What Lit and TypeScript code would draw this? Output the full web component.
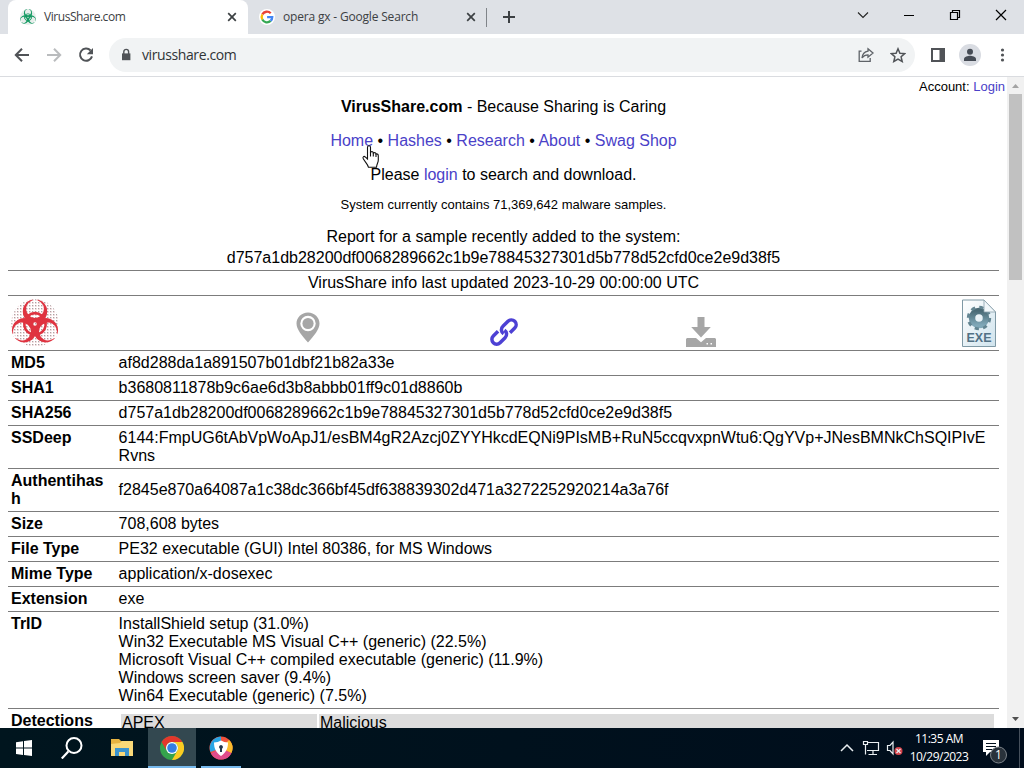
import { LitElement, css, html, svg } from 'lit';
import { customElement, property } from 'lit/decorators.js';

interface ReportRow {
  label: string;
  lines: string[];
  middle?: boolean;
}

const ROWS: ReportRow[] = [
  { label: 'MD5', lines: ['af8d288da1a891507b01dbf21b82a33e'] },
  { label: 'SHA1', lines: ['b3680811878b9c6ae6d3b8abbb01ff9c01d8860b'] },
  { label: 'SHA256', lines: ['d757a1db28200df0068289662c1b9e78845327301d5b778d52cfd0ce2e9d38f5'] },
  {
    label: 'SSDeep',
    lines: ['6144:FmpUG6tAbVpWoApJ1/esBM4gR2Azcj0ZYYHkcdEQNi9PIsMB+RuN5ccqvxpnWtu6:QgYVp+JNesBMNkChSQIPIvE', 'Rvns'],
  },
  {
    label: 'Authentihash',
    lines: ['f2845e870a64087a1c38dc366bf45df638839302d471a3272252920214a3a76f'],
    middle: true,
  },
  { label: 'Size', lines: ['708,608 bytes'] },
  { label: 'File Type', lines: ['PE32 executable (GUI) Intel 80386, for MS Windows'] },
  { label: 'Mime Type', lines: ['application/x-dosexec'] },
  { label: 'Extension', lines: ['exe'] },
  {
    label: 'TrID',
    lines: [
      'InstallShield setup (31.0%)',
      'Win32 Executable MS Visual C++ (generic) (22.5%)',
      'Microsoft Visual C++ compiled executable (generic) (11.9%)',
      'Windows screen saver (9.4%)',
      'Win64 Executable (generic) (7.5%)',
    ],
  },
];

const NAV = ['Home', 'Hashes', 'Research', 'About', 'Swag Shop'];

// Biohazard mark: three open rings around a centre, plus a middle ring.
const biohazard = (id: string, color: string, size: number) => html`
  <svg width=${size} height=${size} viewBox="0 0 48 48">
    <defs>
      <pattern id="${id}-dots" width="3" height="3" patternUnits="userSpaceOnUse">
        <rect width="2" height="2" fill=${color} opacity="0.12" />
        <rect width="1.2" height="1.2" fill="#777" opacity="0.6" />
      </pattern>
      <mask id="${id}-mask">
        <rect width="48" height="48" fill="#fff" />
        ${[0, 120, 240].map(
          (a) => svg`<g transform="rotate(${a} 24 25)">
            <circle cx="24" cy="10" r="8.9" fill="#000" />
            <rect x="21.5" y="0" width="5" height="6" fill="#000" />
          </g>`,
        )}
        <circle cx="24" cy="25" r="1.8" fill="#000" />
      </mask>
    </defs>
    <circle cx="24" cy="24" r="23.8" fill="url(#${id}-dots)" />
    <g mask="url(#${id}-mask)" fill=${color}>
      ${[0, 120, 240].map((a) => svg`<circle cx="24" cy="12.5" r="12.2" transform="rotate(${a} 24 25)" />`)}
    </g>
    <g fill="none" stroke=${color} stroke-width="2.6">
      ${[0, 120, 240].map((a) => svg`<path d="M17 16.8Q24 11.6 31 16.8" transform="rotate(${a} 24 25)" />`)}
    </g>
  </svg>
`;

const closeIcon = html`<svg width="10" height="10" viewBox="0 0 10 10">
  <path d="M1.2 1.2l7.6 7.6M8.8 1.2L1.2 8.8" stroke="#3c4043" stroke-width="1.7" />
</svg>`;

@customElement('browser-tabs')
export class BrowserTabs extends LitElement {
  static styles = css`
    :host {
      display: flex;
      height: 34px;
      padding-left: 8px;
      background: #dee1e6;
      font: 12px/34px 'Open Sans', 'Noto Sans', sans-serif;
      color: #3c4043;
    }
    svg {
      display: block;
      flex: none;
    }
    .tab {
      display: flex;
      align-items: center;
      box-sizing: border-box;
      width: 240px;
      padding: 0 11px 0 12px;
    }
    .active {
      background: #fff;
      border-radius: 8px 8px 0 0;
    }
    .idle {
      padding: 0 12px 0 11px;
    }
    .title {
      flex: 1;
      margin-left: 8px;
      white-space: nowrap;
      letter-spacing: -0.45px;
    }
    .search {
      letter-spacing: -0.18px;
    }
    .rule {
      width: 1px;
      height: 19px;
      margin: 8px 16px 0 -2px;
      background: #808489;
    }
    .plus {
      margin-top: 11px;
    }
    .controls {
      display: flex;
      align-items: center;
      height: 29px;
      margin-left: auto;
      padding-right: 17px;
      gap: 34px;
    }
  `;

  render() {
    return html`
      <div class="tab active">
        ${biohazard('fav', '#159a63', 16)}
        <span class="title">VirusShare.com</span>${closeIcon}
      </div>
      <div class="tab idle">
        <svg width="16" height="16" viewBox="0 0 15 15">
          <circle cx="7.5" cy="7.5" r="7.5" fill="#fff" />
          <g fill="none" stroke-width="2.2">
            <path d="M11 4A5 5 0 0 0 3.1 5.1" stroke="#ea4335" />
            <path d="M3.1 5.1A5 5 0 0 0 3.1 9.9" stroke="#fbbc05" />
            <path d="M3.1 9.9A5 5 0 0 0 10.9 11.2" stroke="#34a853" />
            <path d="M10.9 11.2A5 5 0 0 0 12.4 7.6H7.6" stroke="#4285f4" />
          </g>
        </svg>
        <span class="title search">opera gx - Google Search</span>${closeIcon}
      </div>
      <div class="rule"></div>
      <svg class="plus" width="12" height="12" viewBox="0 0 12 12">
        <path d="M6 0v12M0 6h12" stroke="#3c4043" stroke-width="2" />
      </svg>
      <div class="controls">
        <svg width="12" height="12" viewBox="0 0 12 12">
          <path d="M1 3.5l5 5 5-5" fill="none" stroke="#222" stroke-width="1.1" />
        </svg>
        <svg width="12" height="12" viewBox="0 0 12 12"><path d="M1 6.5h10" stroke="#000" /></svg>
        <svg width="12" height="12" viewBox="0 0 12 12">
          <path d="M1.5 3.5h7v7h-7zM3.5 3.5v-2h7v7h-2" fill="none" stroke="#000" stroke-width="1.2" />
        </svg>
        <svg width="12" height="12" viewBox="0 0 12 12">
          <path d="M1 1l10 10M11 1L1 11" stroke="#000" stroke-width="1.2" />
        </svg>
      </div>
    `;
  }
}

@customElement('browser-toolbar')
export class BrowserToolbar extends LitElement {
  @property()
  url = '';

  static styles = css`
    :host {
      display: flex;
      align-items: center;
      box-sizing: border-box;
      height: 43px;
      padding: 0 13px 0 14px;
      border-bottom: 1px solid #dadce0;
      background: #fff;
      gap: 16px;
    }
    svg {
      display: block;
      flex: none;
    }
    .omnibox {
      display: flex;
      align-items: center;
      flex: 1;
      box-sizing: border-box;
      height: 34px;
      margin: 0 -1px;
      padding: 0 9px 0 10px;
      border-radius: 17px;
      background: #f1f3f4;
      gap: 16px;
    }
    .url {
      flex: 1;
      margin-left: -7px;
      font: 14px/32px 'Open Sans', 'Noto Sans', sans-serif;
      letter-spacing: -0.4px;
      color: #303336;
    }
    .avatar {
      margin: 0 -2px 0 -3px;
    }
  `;

  render() {
    return html`
      <svg width="16" height="16" viewBox="0 0 16 16">
        <path d="M15 8H2M8 1.8L1.8 8L8 14.2" fill="none" stroke="#505357" stroke-width="2" />
      </svg>
      <svg width="16" height="16" viewBox="0 0 16 16">
        <path d="M1 8h13M8 1.8L14.2 8L8 14.2" fill="none" stroke="#babcbe" stroke-width="2" />
      </svg>
      <svg width="16" height="16" viewBox="0 0 16 16">
        <path d="M12.6 3.5A6.1 6.1 0 1 0 14 9.4" fill="none" stroke="#505357" stroke-width="2" />
        <path d="M15 1v6.2H8.8z" fill="#505357" />
      </svg>
      <div class="omnibox">
        <svg width="14" height="14" viewBox="0 0 14 14">
          <path d="M3 5.4h8.4v6.8H3z" fill="#505357" />
          <path d="M4.8 6V3.8a2.4 2.4 0 0 1 4.8 0V6" fill="none" stroke="#505357" stroke-width="1.4" />
        </svg>
        <span class="url">${this.url}</span>
        <svg width="16" height="16" viewBox="0 0 16 16" fill="none" stroke="#5f6368" stroke-width="1.3">
          <path d="M3.5 4.2H1.2v10.2h11V11" />
          <path d="M10 1.8l5 4.2-5 4.2V7.9C7.2 7.9 5.6 8.7 4 11c.4-3.6 2.4-6.2 6-6.8z" />
        </svg>
        <svg width="16" height="16" viewBox="0 0 16 16">
          <path
            d="M8 1.8l1.9 4.4 4.8.4-3.6 3.2 1.1 4.7L8 12l-4.2 2.5 1.1-4.7L1.3 6.6l4.8-.4z"
            fill="none"
            stroke="#505357"
            stroke-width="1.5"
          />
        </svg>
      </div>
      <svg width="16" height="16" viewBox="0 0 16 16">
        <path d="M1 1h14v14H1zM3 3v10h6.5V3z" fill="#505357" fill-rule="evenodd" />
      </svg>
      <svg class="avatar" width="22" height="22" viewBox="0 0 22 22">
        <circle cx="11" cy="11" r="11" fill="#d9dce2" />
        <circle cx="11" cy="7.8" r="3" fill="#454b54" />
        <path d="M5 17v-2c0-2.5 4-3.3 6-3.3s6 .8 6 3.3v2z" fill="#454b54" />
      </svg>
      <svg width="16" height="16" viewBox="0 0 16 16" fill="#505357">
        <circle cx="7.5" cy="3" r="1.6" />
        <circle cx="7.5" cy="8" r="1.6" />
        <circle cx="7.5" cy="13" r="1.6" />
      </svg>
    `;
  }
}

@customElement('share-page')
export class SharePage extends LitElement {
  static styles = css`
    :host {
      display: block;
      box-sizing: border-box;
      height: 100%;
      overflow: hidden;
      padding: 0 8px;
      font: 16px/18px 'Liberation Sans', Arial, sans-serif;
      color: #000;
    }
    a {
      color: #4a41c8;
    }
    p {
      margin: 0 0 16px;
    }
    .account {
      height: 21px;
      margin-right: -6px;
      font-size: 13px;
      line-height: 20px;
      text-align: right;
    }
    .intro {
      text-align: center;
    }
    .intro .count {
      margin: -3px 0 14px;
      font-size: 13px;
      line-height: 15px;
    }
    .intro .recent {
      margin: 0;
      padding-bottom: 2px;
      line-height: 21px;
    }
    .row {
      display: flex;
      border-bottom: 1px solid #7c7c7c;
    }
    .updated {
      border-top: 1px solid #7c7c7c;
      border-bottom: 1px solid #7c7c7c;
      padding: 3px;
      text-align: center;
    }
    .label {
      flex: none;
      width: 94px;
      padding: 3px 10px 3px 3px;
      font-weight: bold;
      word-break: break-all;
    }
    .label.wide {
      word-break: normal;
    }
    .value {
      flex: 1;
      padding: 3px 3px 3px 3.6px;
      white-space: nowrap;
    }
    .middle {
      align-self: center;
    }
    .icons {
      display: grid;
      grid-template-columns: 202px 196px 196px 198px 1fr;
      height: 54px;
      border-bottom: 1px solid #7c7c7c;
      justify-items: center;
      align-items: end;
    }
    .icons svg {
      display: block;
    }
    .icons :first-child {
      justify-self: start;
      margin: 0 0 3px 3px;
    }
    .icons .pin {
      margin-bottom: 7px;
    }
    .icons .mid {
      margin-bottom: 2px;
    }
    .icons :last-child {
      justify-self: end;
      margin: 0 3px 3px 0;
    }
    .detections {
      flex: 1;
      display: grid;
      grid-template-columns: 196px 675px;
      gap: 2px;
      padding: 5px 0 0 5px;
      margin-left: 1px;
    }
    .detections span {
      padding: 0 1px 2px;
      height: 20px;
      background: #dcdcdc;
    }
    .exe {
      font: bold 12.5px 'Liberation Sans', Arial, sans-serif;
    }
  `;

  render() {
    return html`
      <div class="account">Account: <a>Login</a></div>
      <div class="intro">
        <p><b>VirusShare.com</b> - Because Sharing is Caring</p>
        <p>${NAV.map((item, i) => html`${i ? ' • ' : ''}<a>${item}</a>`)}</p>
        <p>Please <a>login</a> to search and download.</p>
        <p class="count">System currently contains 71,369,642 malware samples.</p>
        <p class="recent">
          Report for a sample recently added to the system:<br />
          d757a1db28200df0068289662c1b9e78845327301d5b778d52cfd0ce2e9d38f5
        </p>
      </div>
      <div class="updated">VirusShare info last updated 2023-10-29 00:00:00 UTC</div>
      <div class="icons">
        ${biohazard('logo', '#df3340', 48)}
        <svg class="pin" width="24" height="31" viewBox="0 0 24 31">
          <path
            d="M12 .5C5.5.5.5 5.5.5 11.5c0 6 5.5 12 11.5 19 6-7 11.5-13 11.5-19C23.5 5.5 18.5.5 12 .5z"
            fill="#a6a6a6"
          />
          <circle cx="12" cy="11.5" r="7.7" fill="#fff" />
          <circle cx="12" cy="11.5" r="5.6" fill="#a6a6a6" />
        </svg>
        <svg class="mid" width="32" height="32" viewBox="0 0 32 32">
          <g transform="translate(1.3 1.3) scale(0.92) rotate(-45 16 16)" fill="none" stroke="#4d41d4" stroke-width="3.8">
            <path d="M12 10.8H4.7a5.2 5.2 0 0 0 0 10.4H12.5a5.2 5.2 0 0 0 5.2-6.3" />
            <path d="M20 21.2h7.3a5.2 5.2 0 0 0 0-10.4H19.5a5.2 5.2 0 0 0-5.2 6.3" />
          </g>
        </svg>
        <svg class="mid" width="30" height="32" viewBox="0 0 30 32" fill="#a6a6a6">
          <path d="M11.5 1h7v10h6.3L15 21.5 5.2 11h6.3z" />
          <path d="M1 22h9l5 4.3L20 22h9l1 1v8H0v-8z" />
          <path d="M20.5 27H22v1.5h-1.5zM24.5 27H26v1.5h-1.5z" fill="#fff" />
        </svg>
        <svg width="34" height="48" viewBox="0 0 34 48">
          <defs>
            <linearGradient id="sheet" x2="1" y2="1">
              <stop offset="0" stop-color="#fff" />
              <stop offset="1" stop-color="#cfe3ed" />
            </linearGradient>
            <linearGradient id="gear" x2="0" y2="1">
              <stop offset="0" stop-color="#4a6a75" />
              <stop offset="1" stop-color="#80a8b8" />
            </linearGradient>
          </defs>
          <path d="M.5 1h21.5l11.5 12v34.5H.5z" fill="url(#sheet)" stroke="#7f99a5" />
          <circle cx="17" cy="19" r="7" fill="none" stroke="url(#gear)" stroke-width="6.5" />
          <circle cx="17" cy="19" r="10.8" fill="none" stroke="#638592" stroke-width="2.8" stroke-dasharray="4.24 4.24" />
          <path d="M22 1v12h11.5z" fill="#f1f7fa" stroke="#8ba1ac" stroke-width=".8" />
          <text class="exe" x="17" y="43" text-anchor="middle" fill="#527185">EXE</text>
        </svg>
      </div>
      ${ROWS.map(
        (row) => html`<div class="row">
          <div class="label ${row.label.includes(' ') ? 'wide' : ''}">${row.label}</div>
          <div class="value ${row.middle ? 'middle' : ''}">${row.lines.map((line) => html`<div>${line}</div>`)}</div>
        </div>`,
      )}
      <div class="row">
        <div class="label">Detections</div>
        <div class="detections"><span>APEX</span><span>Malicious</span></div>
      </div>
    `;
  }
}

@customElement('task-bar')
export class TaskBar extends LitElement {
  static styles = css`
    :host {
      display: flex;
      align-items: center;
      height: 40px;
      background: linear-gradient(90deg, #00151e, #000d1c);
      color: #fff;
    }
    svg {
      display: block;
    }
    .item {
      display: flex;
      align-items: center;
      justify-content: center;
      box-sizing: border-box;
      width: 48px;
      height: 40px;
    }
    .folder {
      width: 52px;
    }
    .open {
      border-bottom: 2px solid #76b9ed;
      padding-top: 2px;
      width: 40px;
      margin-left: 5px;
    }
    .current {
      background: #334850;
      width: 48px;
      margin-left: 0;
    }
    .tray {
      display: flex;
      align-items: center;
      margin-left: auto;
      height: 40px;
    }
    .icons {
      margin-right: -1px;
    }
    .clock {
      width: 60px;
      margin-right: 6px;
      font: 12px/18px 'Open Sans', 'Noto Sans', sans-serif;
      letter-spacing: -0.5px;
      text-align: center;
      white-space: nowrap;
    }
    .desktop {
      width: 4px;
      height: 40px;
      margin-left: 4px;
      border-left: 1px solid #46505c;
    }
    .badge {
      font: 12px 'Open Sans', sans-serif;
    }
  `;

  render() {
    return html`
      <div class="item">
        <svg width="16" height="16" viewBox="0 0 16 16">
          <path d="M0 2.2L7 1.2v6.4H0zM8 1l8-1v7.6H8zM0 8.6h7V15L0 14zM8 8.6h8V16l-8-1z" fill="#fff" />
        </svg>
      </div>
      <div class="item">
        <svg width="22" height="22" viewBox="0 0 22 22">
          <path d="M7.3 14.6L.8 21.5" stroke="#fff" stroke-width="2.2" />
          <circle cx="13" cy="8.5" r="7.5" fill="none" stroke="#fff" stroke-width="2" />
        </svg>
      </div>
      <div class="item folder">
        <svg width="22" height="20" viewBox="0 0 22 20">
          <path d="M0 1h8l2 2h11v15H0z" fill="#e8b441" />
          <path d="M0 6l9-1 2-2h11v15H0z" fill="#fad978" />
          <path d="M4 10h14v8h-4v-4H8v4H4z" fill="#3c94ce" />
        </svg>
      </div>
      <div class="item open current">
        <svg width="24" height="24" viewBox="0 0 24 24">
          <circle cx="12" cy="12" r="12" fill="#35a34c" />
          <path d="M1.6 6A12 12 0 0 1 22.4 6H12A6 6 0 0 0 6.8 15z" fill="#e3372c" />
          <path d="M22.4 6A12 12 0 0 1 12 24l5.2-9A6 6 0 0 0 12 6z" fill="#fbcb22" />
          <circle cx="12" cy="12" r="6" fill="#fff" />
          <circle cx="12" cy="12" r="4.8" fill="#347ee4" />
        </svg>
      </div>
      <div class="item open">
        <svg width="24" height="24" viewBox="0 0 24 24">
          <circle cx="12" cy="12" r="11.5" fill="#f0523d" />
          <path d="M12 12V.5A11.5 11.5 0 0 0 1.5 16z" fill="#28a5e5" />
          <path d="M12 12L2 17.5a11.5 11.5 0 0 0 20.5-.5z" fill="#e04c8b" />
          <path d="M12 12l10.5 5A11.5 11.5 0 0 0 20 4z" fill="#fbbc2d" />
          <path d="M5 6.5q4 0 7-2 3 2 7 2c0 6-2 10-7 13.500-5-3.500-7-7.500-7-13.500z" fill="#fff" />
          <path d="M12 9a2 2 0 0 0-1 3.7V16h2v-3.3A2 2 0 0 0 12 9z" fill="#23364c" />
        </svg>
      </div>
      <div class="tray">
        <svg class="icons" width="70" height="22" viewBox="0 0 70 22" fill="none" stroke="#e9eef1" stroke-width="1.2">
          <path d="M1 14l6-6 6 6" stroke-width="1.5" />
          <path d="M28 5.5h10.5v8H27M23.5 4.5h4v3h-4zM25.5 7.5v10M33 13.5v3.5M28.5 17.5h8.5" />
          <path d="M47.5 8.5h2.5l3-3.5v12l-3-3.5h-2.5z" />
          <circle cx="58.5" cy="14" r="4" fill="#d6434b" stroke="none" />
          <path d="M56.5 12l4 4M60.5 12l-4 4" />
        </svg>
        <div class="clock">11:35 AM<br />10/29/2023</div>
        <svg width="40" height="40" viewBox="0 0 40 40">
          <path d="M8 12h16v12H15l-4 4v-4H8z" fill="#fff" />
          <path d="M11 15.5h10M11 18.5h10M11 21.5h6" stroke="#02111e" />
          <circle cx="23.5" cy="27" r="8" fill="#29323b" stroke="#7c838a" />
          <text class="badge" x="23.5" y="31.3" fill="#fff" text-anchor="middle">1</text>
        </svg>
        <div class="desktop"></div>
      </div>
    `;
  }
}

@customElement('app-root')
export class AppRoot extends LitElement {
  static styles = css`
    :host {
      display: flex;
      flex-direction: column;
      position: relative;
      width: 1024px;
      height: 768px;
      overflow: hidden;
      background: #fff;
    }
    .view {
      display: flex;
      flex: 1;
      min-height: 0;
    }
    share-page {
      flex: 1;
      min-width: 0;
    }
    .scrollbar {
      display: flex;
      flex-direction: column;
      align-items: center;
      width: 17px;
      background: #f1f1f1;
    }
    .arrow {
      display: block;
      height: 17px;
      width: 17px;
    }
    .thumb {
      width: 13px;
      height: 186px;
      margin-bottom: auto;
      background: #c1c1c1;
    }
    .cursor {
      position: absolute;
      left: 361px;
      top: 145px;
    }
  `;

  render() {
    return html`
      <browser-tabs></browser-tabs>
      <browser-toolbar url="virusshare.com"></browser-toolbar>
      <div class="view">
        <share-page></share-page>
        <div class="scrollbar">
          <svg class="arrow" viewBox="0 0 17 17"><path d="M5 11l3.5-4 3.5 4z" fill="#a3a3a3" /></svg>
          <div class="thumb"></div>
          <svg class="arrow" viewBox="0 0 17 17"><path d="M5 6l3.5 4L12 6z" fill="#505050" /></svg>
        </div>
      </div>
      <task-bar></task-bar>
      <svg class="cursor" width="20" height="24" viewBox="0 0 20 24">
        <path
          d="M6.5 14V2.2Q6.5.7 8 .7t1.5 1.5V7Q12 6 12.3 8 14.6 7 15 9q2.3-.5 2.3 2v4c0 3-1.8 4-1.8 7.3H7.5C7 19.5 4 17 2.3 13.8 1.3 11.6 3 10.7 4.5 12.2z"
          fill="#fff"
          stroke="#111"
          stroke-width="1.1"
        />
        <path d="M9.5 7v4.5M12.3 8v3.5M15 9v3" stroke="#111" stroke-width="1.1" />
      </svg>
    `;
  }
}

declare global {
  interface HTMLElementTagNameMap {
    'app-root': AppRoot;
    'browser-tabs': BrowserTabs;
    'browser-toolbar': BrowserToolbar;
    'share-page': SharePage;
    'task-bar': TaskBar;
  }
}
